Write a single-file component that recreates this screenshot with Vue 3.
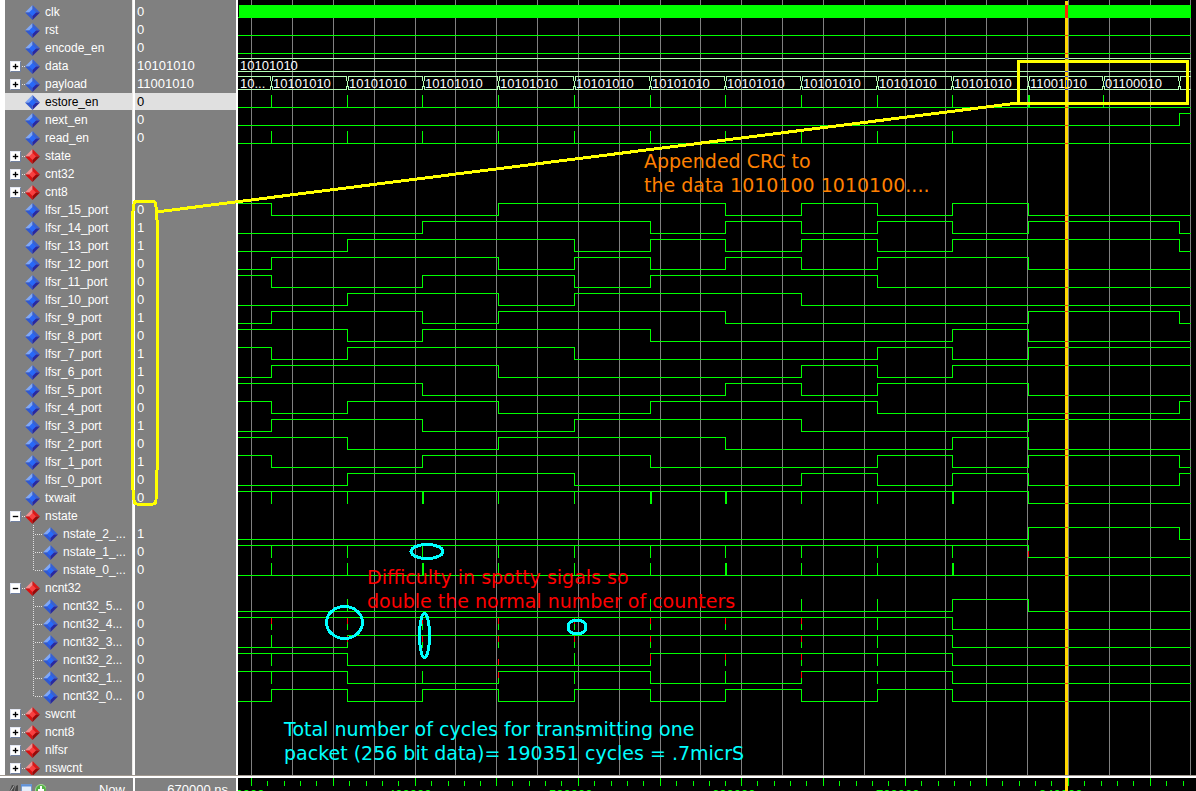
<script setup>
const ROW = 18
const TOP = 3
const END = 1191
const START = 238
const EDGES = [271, 347, 422, 498, 574, 650, 725, 801, 877, 952, 1028, 1103, 1179]
const FLAT = '00000000000000'

// levels: one digit per interval between edges
// pulses: edge indices with a short glitch; wide: glitches two pixels across
// redTop / redBottom: edges whose upper or lower half is an unknown value
const signals = [
  { name: 'clk', value: '0', clock: true },
  { name: 'rst', value: '0', levels: FLAT },
  { name: 'encode_en', value: '0', levels: FLAT },
  { name: 'data', value: '10101010', toggle: '+', bus: 'data' },
  { name: 'payload', value: '11001010', toggle: '+', bus: 'payload' },
  { name: 'estore_en', value: '0', levels: FLAT, pulses: [0, 1, 2, 3, 4, 5, 6, 7, 8, 9, 10, 11], wide: [10], selected: true },
  { name: 'next_en', value: '0', levels: '00000000000001' },
  { name: 'read_en', value: '0', levels: FLAT, pulses: [0, 1, 2, 3, 4, 5, 6, 7, 8, 9] },
  { name: 'state', group: true, toggle: '+' },
  { name: 'cnt32', group: true, toggle: '+' },
  { name: 'cnt8', group: true, toggle: '+' },
  { name: 'lfsr_15_port', value: '0', levels: '10001110101000' },
  { name: 'lfsr_14_port', value: '1', levels: '00011101010110' },
  { name: 'lfsr_13_port', value: '1', levels: '00111010101110' },
  { name: 'lfsr_12_port', value: '0', levels: '01110101011000' },
  { name: 'lfsr_11_port', value: '0', levels: '10011011100000' },
  { name: 'lfsr_10_port', value: '0', levels: '00110111000000' },
  { name: 'lfsr_9_port', value: '1', levels: '01101110000110' },
  { name: 'lfsr_8_port', value: '0', levels: '11011100001000' },
  { name: 'lfsr_7_port', value: '1', levels: '10111000010111' },
  { name: 'lfsr_6_port', value: '1', levels: '01110000101111' },
  { name: 'lfsr_5_port', value: '0', levels: '11100001011000' },
  { name: 'lfsr_4_port', value: '0', levels: '10110011100001' },
  { name: 'lfsr_3_port', value: '1', levels: '01100111000111' },
  { name: 'lfsr_2_port', value: '0', levels: '11001110001000' },
  { name: 'lfsr_1_port', value: '1', levels: '10011100010110' },
  { name: 'lfsr_0_port', value: '0', levels: '00111000101001' },
  { name: 'txwait', value: '0', levels: '11111111111000', pulses: [0, 1, 2, 3, 4, 5, 6, 7, 8, 9], wide: [2, 5, 6, 9] },
  { name: 'nstate', group: true, toggle: '−' },
  { name: 'nstate_2_...', value: '1', child: true, levels: '00000000000110' },
  { name: 'nstate_1_...', value: '0', child: true, levels: '11111111111000', pulses: [0, 1, 2, 3, 4, 5, 6, 7, 8, 9], redBottom: [10] },
  { name: 'nstate_0_...', value: '0', child: true, last: true, levels: FLAT, pulses: [0, 1, 2, 3, 4, 5, 6, 7, 8, 9], wide: [2, 6, 9] },
  { name: 'ncnt32', group: true, toggle: '−' },
  { name: 'ncnt32_5...', value: '0', child: true, levels: '00000000001000', pulses: [1, 5, 7, 8] },
  { name: 'ncnt32_4...', value: '0', child: true, levels: '11111111110000', pulses: [0, 1, 2, 3, 4, 5, 6, 7, 8], redTop: [0, 1, 2, 3, 4, 5, 6, 7] },
  { name: 'ncnt32_3...', value: '0', child: true, levels: '00111111110000', pulses: [0, 2, 3, 4, 5, 7, 8], redTop: [1, 2, 3, 4, 5, 7] },
  { name: 'ncnt32_2...', value: '0', child: true, levels: '11000011110000', pulses: [0, 4, 6, 7, 8], redTop: [5, 6, 7], redBottom: [3] },
  { name: 'ncnt32_1...', value: '0', child: true, levels: '11001100110000', pulses: [0, 2, 4, 6, 8], redTop: [3, 7] },
  { name: 'ncnt32_0...', value: '0', child: true, last: true, levels: '01010101010000' },
  { name: 'swcnt', group: true, toggle: '+' },
  { name: 'ncnt8', group: true, toggle: '+' },
  { name: 'nlfsr', group: true, toggle: '+' },
  { name: 'nswcnt', group: true, toggle: '+' }
].map((s, i) => ({ ...s, y: TOP + i * ROW }))

const levelY = (s, bit) => s.y + (bit === '1' ? 2 : 14) + 0.5

function tracePath(s) {
  let d = `M${START} ${levelY(s, s.levels[0])}`
  EDGES.forEach((x, i) => {
    d += `H${x + 0.5}V${levelY(s, s.levels[i + 1])}`
  })
  return d + `H${END}`
}

const traces = signals.filter((s) => s.levels)
const gridXs = [251, 292, 333, 374, 415, 455, 496, 537, 578, 619, 660, 700, 741, 782, 823, 864, 905, 945, 986, 1027, 1068, 1109, 1150, 1190]
const majorXs = [251, 333, 415, 496, 578, 660, 741, 823, 905, 986, 1068, 1150]
const minorXs = majorXs.flatMap((x) => [16, 33, 49, 65].map((dx) => x + dx)).filter((x) => x < END)
const timeLabels = [
  { x: 221, text: '240000 ns' },
  { x: 388, text: '400000 ns' },
  { x: 549, text: '500000 ns' },
  { x: 712, text: '600000 ns' },
  { x: 876, text: '700000 ns' },
  { x: 1039, text: '840000 ns' }
]

const busData = signals[3]
const busPayload = signals[4]
const busEdges = EDGES.map((x, i) => (i === 2 ? x + 1 : x))
const payloadTexts = ['10...', ...Array(10).fill('10101010'), '11001010', '01100010'].map((text, i) => ({
  text,
  x: i === 0 ? 240 : busEdges[i - 1] + 2
}))
const payloadPath = (() => {
  const top = busPayload.y + 1.5
  const bottom = busPayload.y + 14.5
  let d = ''
  let from = START
  for (const x of busEdges) {
    d += `M${from} ${top}H${x - 0.5}v4M${from} ${bottom}H${x - 0.5}v-4`
    d += `M${x + 0.5} ${top + 4}V${bottom - 3}`
    d += `M${x + 1.5} ${top}v4M${x + 1.5} ${bottom}v-4`
    from = x + 1
  }
  return d + `M${from} ${top}H${END}M${from} ${bottom}H${END}`
})()
</script>

<template>
  <div class="viewer">
    <main class="panes">
      <table class="signals" aria-label="Signals">
        <tbody>
          <tr v-for="s in signals" :key="s.name" :class="{ selected: s.selected }">
            <td class="name">
              <div class="cell">
                <span class="gutter" :class="{ nested: s.child }">
                  <button v-if="s.toggle" class="toggle" type="button" :aria-label="'Toggle ' + s.name">
                    <svg width="10" height="10" viewBox="0 0 10 10">
                      <path d="M2 5h6" />
                      <path v-if="s.toggle === '+'" d="M5 2v6" />
                    </svg>
                  </button>
                  <svg v-if="s.toggle" class="dots" width="5" height="18"><path d="M1 9.5h4" /></svg>
                  <svg v-if="s.child" class="dots" width="38" height="18">
                    <path :d="s.last ? 'M28.5 0V10' : 'M28.5 0V18'" />
                    <path d="M30 9.5h8" />
                  </svg>
                </span>
                <svg class="gem" :class="{ crimson: s.group }" width="15" height="15" viewBox="0 0 15 15">
                  <path class="nw" d="M7.5 0 0 7.5h7.5z" />
                  <path class="ne" d="M7.5 0 15 7.5H7.5z" />
                  <path class="sw" d="M0 7.5 7.5 15V7.5z" />
                  <path class="se" d="M15 7.5 7.5 15V7.5z" />
                  <path class="core" d="M7.5 4 11 7.5 7.5 11 4 7.5z" />
                </svg>
                <span>{{ s.name }}</span>
              </div>
            </td>
            <td class="value">{{ s.value }}</td>
          </tr>
        </tbody>
      </table>

      <div class="waves">
        <svg width="100%" height="100%">
          <g transform="translate(-238 0)" shape-rendering="crispEdges">
            <path v-for="x in gridXs" :key="x" class="grid" :d="`M${x + 0.5} 0V775`" />
            <rect x="239" y="5" width="952" height="13" fill="#00ff00" />
            <path class="trace" d="M238 17.5h2" />
            <path class="bus" :d="`M238 ${busData.y + 1.5}H1191M238 ${busData.y + 14.5}H1191`" />
            <path class="bus" :d="payloadPath" />
            <g v-for="s in traces" :key="s.name">
              <path class="trace" :d="tracePath(s)" />
              <rect
                v-for="p in s.pulses || []"
                :key="p"
                :x="EDGES[p]"
                :y="s.y + 2"
                :width="s.wide && s.wide.includes(p) ? 2 : 1"
                height="13"
                fill="#00ff00"
              />
              <rect v-for="p in s.redTop || []" :key="'t' + p" :x="EDGES[p]" :y="s.y + 3" width="1" height="6" fill="#ff0000" />
              <rect v-for="p in s.redBottom || []" :key="'b' + p" :x="EDGES[p]" :y="s.y + 8" width="1" height="6" fill="#ff0000" />
            </g>
            <text class="bus-text" x="240" :y="busData.y + 13">10101010</text>
            <text v-for="t in payloadTexts" :key="t.x" class="bus-text" :x="t.x" :y="busPayload.y + 13">{{ t.text }}</text>
            <rect x="1065" y="1" width="3" height="774" fill="#ffd700" />
            <rect x="1065" y="5" width="3" height="13" fill="#ff2800" />
            <rect v-for="s in traces" :key="'c' + s.name" x="1065" :y="levelY(s, s.levels[11]) - 0.5" width="3" height="1" fill="#ff2800" />
            <path class="crossing" d="M1065 58.5h3M1065 71.5h3M1065 76.5h3M1065 89.5h3" />
            <path class="glyph-crossing" d="M1066.5 80v7" />
          </g>
        </svg>
      </div>
    </main>

    <footer class="status">
      <div class="now">
        <svg width="38" height="14" viewBox="0 0 38 14">
          <path d="M0 12 4 2l3 1-2 9zM6 12l2-9 2-1v10z" fill="#454545" />
          <path d="M2 9 6 3" stroke="#b0b0b0" />
          <rect x="13.5" y="1.5" width="10" height="11" fill="#e4eefa" stroke="#7898c8" />
          <path d="M13 2.5h11" stroke="#5f92da" stroke-width="2" />
          <circle cx="33" cy="7" r="5.5" fill="#54b044" stroke="#a4dc98" />
          <path d="M33 3v8M30 7h6" stroke="#ffffff" stroke-width="2" />
        </svg>
        <span>Now</span>
      </div>
      <div class="time">670000 ns</div>
      <div class="ruler">
        <svg width="100%" height="100%">
          <g transform="translate(-238 -778)" shape-rendering="crispEdges">
            <path v-for="x in majorXs" :key="x" class="trace" :d="`M${x + 0.5} 778v8`" />
            <path v-for="x in minorXs" :key="x" class="trace" :d="`M${x + 0.5} 781v5`" />
            <text v-for="t in timeLabels" :key="t.x" class="time-text" :x="t.x" y="799">{{ t.text }}</text>
            <rect x="1065" y="778" width="3" height="40" fill="#ffd700" />
          </g>
        </svg>
      </div>
    </footer>

    <svg class="notes" width="100%" height="100%">
      <g fill="none" stroke="#ffff00" stroke-width="3" shape-rendering="crispEdges">
        <path d="M136 201H153Q156 202 156 207L157 220V470L156 500Q156 504 153 504H137Q134 504 134 500L132 480V218L134 204Q134 201 137 201Z" />
        <path d="M156 212 1018 103h5" />
        <rect x="1018.5" y="61.5" width="169" height="42" />
      </g>
      <g fill="none" stroke="#00ffff" stroke-width="3" shape-rendering="crispEdges">
        <ellipse cx="344.5" cy="622.5" rx="18" ry="16" />
        <ellipse cx="427" cy="551.5" rx="16" ry="7" />
        <ellipse cx="424.5" cy="635.5" rx="5" ry="22" />
        <ellipse cx="577" cy="627" rx="9" ry="7" />
      </g>
      <text class="note orange"><tspan x="644" y="168">Appended CRC to</tspan><tspan x="644" y="192">the data 1010100 1010100....</tspan></text>
      <text class="note red"><tspan x="367" y="584">Difficulty in spotty sigals so</tspan><tspan x="367" y="608">double the normal number of counters</tspan></text>
      <text class="note cyan"><tspan x="284" y="736">Total number of cycles for transmitting one</tspan><tspan x="284" y="760">packet (256 bit data)= 190351 cycles = .7micrS</tspan></text>
    </svg>
  </div>
</template>

<style>
body {
  margin: 0;
  background: #000000;
}
</style>

<style scoped>
.viewer {
  position: relative;
  height: 100vh;
  display: flex;
  flex-direction: column;
  overflow: hidden;
  background: #000000;
  color: #ffffff;
  font-family: "Liberation Sans", Arial, sans-serif;
  font-size: 13px;
}
.panes {
  flex: 1;
  min-height: 0;
  display: flex;
  overflow: hidden;
}
.signals {
  flex: none;
  width: 238px;
  height: 777px;
  box-sizing: border-box;
  table-layout: fixed;
  border-spacing: 0;
  border-left: 5px solid #ffffff;
  border-right: 2px solid #ffffff;
  padding-top: 3px;
  background: linear-gradient(90deg, #808080 127px, #d8d4d0 127px, #ffffff 128px, #ffffff 130px, #808080 130px);
}
.signals td {
  height: 18px;
  padding: 0;
  line-height: 18px;
  white-space: nowrap;
}
.signals .name {
  width: 127px;
  font-size: 12px;
}
.signals .value {
  padding-left: 5px;
}
.selected td {
  color: #000000;
  background: linear-gradient(#e0e0e0 17px, transparent 17px) no-repeat;
}
.selected .name {
  background-size: 127px 18px;
}
.selected .value {
  background-position: 3px 0;
}
.cell {
  display: flex;
  align-items: center;
  height: 18px;
}
.gutter {
  flex: none;
  display: flex;
  align-items: center;
  width: 20px;
  height: 18px;
}
.gutter.nested {
  width: 38px;
}
.toggle {
  flex: none;
  width: 11px;
  height: 11px;
  margin-left: 5px;
  padding: 0;
  border: 1px solid #e4e8f4;
  border-right-color: #7080a0;
  border-bottom-color: #7080a0;
  background: #ffffff;
}
.toggle svg {
  display: block;
  width: 9px;
  height: 9px;
}
.toggle path {
  stroke: #000000;
  stroke-width: 1.5;
}
.dots path {
  stroke: #e0e0e0;
  stroke-dasharray: 1 1;
}
.gem {
  flex: none;
  margin-right: 5px;
}
.gem .nw { fill: #80a8f8; }
.gem .ne { fill: #3860d0; }
.gem .sw { fill: #3058d0; }
.gem .se { fill: #2828a0; }
.gem .core { fill: #2868f8; }
.gem.crimson .nw { fill: #f09090; }
.gem.crimson .ne { fill: #d81818; }
.gem.crimson .sw { fill: #d81010; }
.gem.crimson .se { fill: #980808; }
.gem.crimson .core { fill: #f84040; }
.waves {
  flex: 1;
  min-width: 0;
}
.waves svg,
.ruler svg {
  display: block;
}
.grid {
  stroke: #808080;
}
.trace {
  fill: none;
  stroke: #00ff00;
}
.bus {
  fill: none;
  stroke: #b4ffb4;
}
.crossing {
  stroke: #5040c0;
}
.glyph-crossing {
  stroke: #0028ff;
}
.bus-text {
  fill: #ffffff;
}
.time-text {
  fill: #00ff00;
}
.status {
  flex: none;
  display: flex;
  height: 13px;
  border-top: 2px solid #ffffff;
  box-shadow: 0 -1px #a09890;
  line-height: 24px;
  z-index: 1;
}
.now {
  flex: none;
  box-sizing: border-box;
  width: 135px;
  display: flex;
  justify-content: space-between;
  padding: 0 8px;
  background: #808080;
  border-right: 2px solid #ffffff;
}
.now svg {
  margin-top: 5px;
}
.time {
  flex: none;
  box-sizing: border-box;
  width: 103px;
  padding-right: 8px;
  text-align: right;
  background: #808080;
  border-right: 2px solid #ffffff;
}
.ruler {
  flex: 1;
  overflow: hidden;
}
.notes {
  position: absolute;
  inset: 0;
  z-index: 2;
  pointer-events: none;
}
.note {
  font-family: "DejaVu Sans", sans-serif;
  font-size: 19px;
}
.orange { fill: #ff8000; }
.red { fill: #ff0000; }
.cyan { fill: #00ffff; }
</style>
